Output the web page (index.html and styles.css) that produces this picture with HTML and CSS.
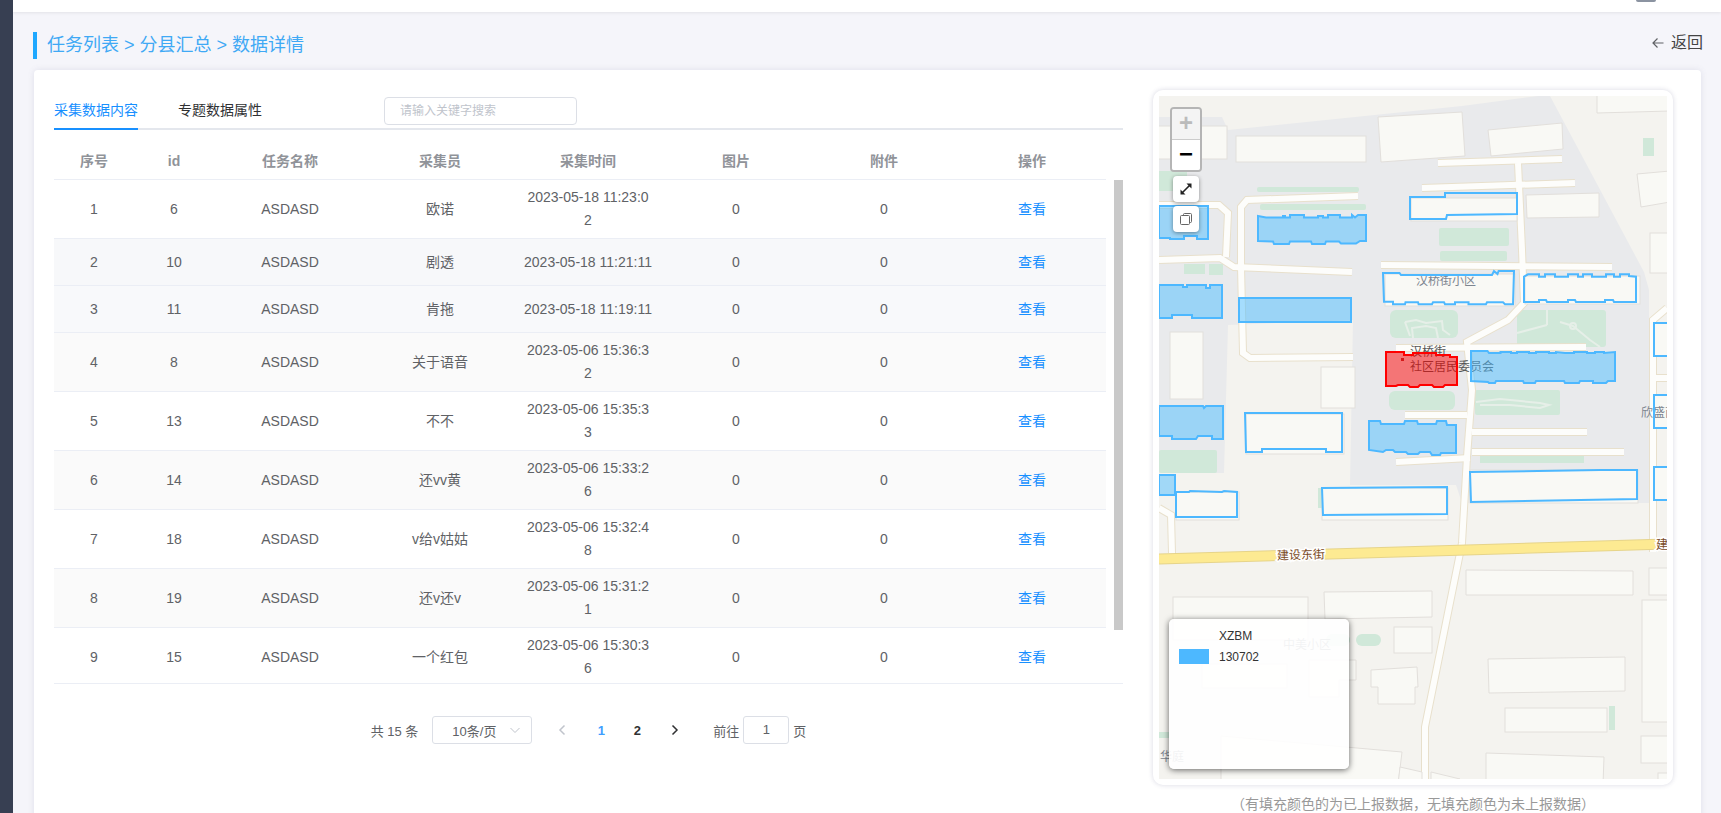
FILE: index.html
```html
<!DOCTYPE html>
<html lang="zh-CN">
  <head>
    <meta charset="UTF-8" />
    <title>数据详情</title>
    <link rel="stylesheet" href="styles.css">
  </head>
  <body>
    <aside class="sidebar"></aside>

    <div class="main">
      <div class="topbar"><span class="avatar"></span></div>

      <div class="title-row">
        <h1 class="title">任务列表 &gt; 分县汇总 &gt; 数据详情</h1>
        <a class="back">
          <svg class="back-icon" viewBox="0 0 12 12"><path d="M11.5 6H1M5.5 1.5 1 6l4.5 4.5" /></svg>
          返回
        </a>
      </div>

      <div class="card">
        <section class="left">
          <div class="tabs">
            <span class="tab active">采集数据内容</span>
            <span class="tab">专题数据属性</span>
            <input class="search" type="text" placeholder="请输入关键字搜索" />
          </div>

          <table class="grid grid-head">
            <colgroup>
              <col class="c1" /><col class="c2" /><col class="c3" /><col class="c4" />
              <col class="c5" /><col class="c6" /><col class="c7" /><col class="c8" />
            </colgroup>
            <thead>
              <tr>
                <th>序号</th>
                <th>id</th>
                <th>任务名称</th>
                <th>采集员</th>
                <th>采集时间</th>
                <th>图片</th>
                <th>附件</th>
                <th>操作</th>
              </tr>
            </thead>
          </table>

          <div class="body-wrap">
            <div class="body-scroll">
              <table class="grid">
                <colgroup>
                  <col class="c1" /><col class="c2" /><col class="c3" /><col class="c4" />
                  <col class="c5" /><col class="c6" /><col class="c7" /><col class="c8" />
                </colgroup>
                <tbody>
                  <tr>
                    <td>1</td><td>6</td><td>ASDASD</td><td>欧诺</td>
                    <td class="time">2023-05-18 11:23:0<br />2</td>
                    <td>0</td><td>0</td><td><a class="link">查看</a></td>
                  </tr>
                  <tr class="hover">
                    <td>2</td><td>10</td><td>ASDASD</td><td>剧透</td>
                    <td class="time">2023-05-18 11:21:11</td>
                    <td>0</td><td>0</td><td><a class="link">查看</a></td>
                  </tr>
                  <tr class="soft">
                    <td>3</td><td>11</td><td>ASDASD</td><td>肯拖</td>
                    <td class="time">2023-05-18 11:19:11</td>
                    <td>0</td><td>0</td><td><a class="link">查看</a></td>
                  </tr>
                  <tr class="stripe">
                    <td>4</td><td>8</td><td>ASDASD</td><td>关于语音</td>
                    <td class="time">2023-05-06 15:36:3<br />2</td>
                    <td>0</td><td>0</td><td><a class="link">查看</a></td>
                  </tr>
                  <tr>
                    <td>5</td><td>13</td><td>ASDASD</td><td>不不</td>
                    <td class="time">2023-05-06 15:35:3<br />3</td>
                    <td>0</td><td>0</td><td><a class="link">查看</a></td>
                  </tr>
                  <tr class="stripe">
                    <td>6</td><td>14</td><td>ASDASD</td><td>还vv黄</td>
                    <td class="time">2023-05-06 15:33:2<br />6</td>
                    <td>0</td><td>0</td><td><a class="link">查看</a></td>
                  </tr>
                  <tr>
                    <td>7</td><td>18</td><td>ASDASD</td><td>v给v姑姑</td>
                    <td class="time">2023-05-06 15:32:4<br />8</td>
                    <td>0</td><td>0</td><td><a class="link">查看</a></td>
                  </tr>
                  <tr class="stripe">
                    <td>8</td><td>19</td><td>ASDASD</td><td>还v还v</td>
                    <td class="time">2023-05-06 15:31:2<br />1</td>
                    <td>0</td><td>0</td><td><a class="link">查看</a></td>
                  </tr>
                  <tr>
                    <td>9</td><td>15</td><td>ASDASD</td><td>一个红包</td>
                    <td class="time">2023-05-06 15:30:3<br />6</td>
                    <td>0</td><td>0</td><td><a class="link">查看</a></td>
                  </tr>
                </tbody>
              </table>
            </div>
            <div class="gutter"><div class="thumb"></div></div>
          </div>

          <div class="pager">
            <span class="total">共 15 条</span>
            <span class="size-select">
              10条/页
              <svg class="size-arrow" viewBox="0 0 12 12"><path d="M1.5 4 6 8.5 10.5 4" /></svg>
            </span>
            <svg class="chev chev-off" viewBox="0 0 10 12"><path d="M7.5 1.5 3 6l4.5 4.5" /></svg>
            <span class="num num-on">1</span>
            <span class="num">2</span>
            <svg class="chev" viewBox="0 0 10 12"><path d="M2.5 1.5 7 6l-4.5 4.5" /></svg>
            <span class="jump">前往</span>
            <span class="jump-box">1</span>
            <span class="jump-end">页</span>
          </div>
        </section>

        <section class="right">
          <div class="map-frame">
            <div class="map">
              <svg class="map-svg" viewBox="1159 96 508 683">
                <defs>
                  <g id="roads">
                    <polyline points="1438,163 1562,159" />
                    <polyline points="1422,188 1575,183" />
                    <polyline points="1518,163 1522,250 1524,303 1508,320 1467,342 1472,390 1467,457 1462,543 1425,727 1425,779" />
                    <polyline points="1381,265 1612,267" />
                    <polyline points="1159,260 1220,258 1234,267 1352,272" />
                    <polyline points="1358,196 1247,200 1241,207 1241,267 1243,353 1250,358 1353,357" />
                    <polyline points="1159,205 1219,205 1228,213 1226,257" />
                    <polyline points="1396,348 1586,347" />
                    <polyline points="1405,415 1467,415" />
                    <polyline points="1472,432 1587,432" />
                    <polyline points="1472,452 1624,452" />
                    <polyline points="1396,462 1470,458" />
                    <polyline points="1667,308 1653,320 1653,552" />
                    <polyline points="1653,378 1667,378" />
                    <polyline points="1159,508 1171,515 1172,553" />
                  </g>
                </defs>

                <polygon class="block" points="1159,117 1222,117 1228,130 1462,106 1538,96 1550,96 1644,272 1649,290 1649,503 1462,503 1456,485 1350,485 1353,320 1228,325 1224,473 1159,473" />

                <g class="green">
                  <rect x="1643" y="138" width="11" height="18" />
                  <rect x="1159" y="171" width="28" height="20" />
                  <rect x="1257" y="187" width="102" height="5" rx="2" />
                  <rect x="1260" y="204" width="106" height="6" rx="2" />
                  <rect x="1439" y="228" width="70" height="18" rx="2" />
                  <rect x="1440" y="251" width="67" height="10" rx="2" />
                  <rect x="1184" y="264" width="21" height="10" />
                  <rect x="1209" y="264" width="14" height="11" />
                  <rect x="1390" y="310" width="68" height="28" rx="6" />
                  <rect x="1517" y="310" width="89" height="37" rx="3" />
                  <rect x="1389" y="391" width="66" height="19" rx="6" />
                  <rect x="1475" y="390" width="85" height="25" rx="2" />
                  <rect x="1159" y="450" width="58" height="23" rx="2" />
                  <rect x="1480" y="455" width="104" height="8" />
                  <rect x="1318" y="488" width="6" height="20" />
                  <rect x="1326" y="634" width="24" height="12" rx="6" />
                  <rect x="1356" y="634" width="25" height="12" rx="6" />
                  <rect x="1609" y="706" width="6" height="24" />
                  <rect x="1159" y="732" width="10" height="6" />
                </g>

                <g class="garden-path">
                  <polyline points="1405,322 1416,320 1426,323 1442,321 1443,330 1450,335" />
                  <polyline points="1405,322 1410,336" />
                  <polyline points="1413,338 1412,328 1426,326 1436,328 1438,338" />
                  <polyline points="1517,333 1547,325" />
                  <polyline points="1547,310 1547,325" />
                  <polyline points="1560,322 1573,326 1590,340 1600,347" />
                  <circle cx="1573" cy="326" r="3" />
                  <polyline points="1476,402 1500,399 1540,403 1549,405 1540,408 1510,405 1480,405" />
                </g>

                <use class="road-edge" href="#roads" />
                <use class="road-top" href="#roads" />

                <g class="bld">
                  <rect x="1158" y="126" width="69" height="33" />
                  <rect x="1236" y="136" width="130" height="26" />
                  <polygon points="1378,117 1462,112 1465,156 1381,162" />
                  <polygon points="1488,130 1562,123 1563,149 1491,156" />
                  <polygon points="1597,90 1670,90 1670,111 1597,113" />
                  <polygon points="1637,174 1670,171 1670,202 1641,207" />
                  <polygon points="1526,195 1599,193 1599,217 1527,218" />
                  <rect x="1650" y="233" width="20" height="40" />
                  <rect x="1411" y="198" width="106" height="23" />
                  <rect x="1385" y="274" width="130" height="32" />
                  <rect x="1525" y="276" width="115" height="28" />
                  <rect x="1170" y="332" width="33" height="67" />
                  <rect x="1321" y="367" width="34" height="41" />
                  <rect x="1246" y="414" width="98" height="40" />
                  <rect x="1176" y="492" width="63" height="28" />
                  <rect x="1322" y="488" width="126" height="32" />
                  <rect x="1470" y="470" width="168" height="33" />
                  <rect x="1654" y="323" width="16" height="33" />
                  <rect x="1654" y="395" width="16" height="33" />
                  <rect x="1654" y="467" width="16" height="33" />
                  <rect x="1173" y="597" width="135" height="43" />
                  <polygon points="1324,592 1432,591 1432,617 1325,619" />
                  <polygon points="1466,570 1633,571 1633,595 1466,595" />
                  <rect x="1649" y="568" width="21" height="27" />
                  <rect x="1394" y="627" width="38" height="26" />
                  <polygon points="1371,670 1417,667 1418,687 1415,687 1415,704 1378,704 1378,687 1371,687" />
                  <polygon points="1309,660 1356,660 1356,680 1339,680 1339,697 1309,697" />
                  <polygon points="1488,659 1625,657 1625,691 1489,693" />
                  <rect x="1642" y="600" width="28" height="122" />
                  <rect x="1505" y="708" width="102" height="24" />
                  <rect x="1641" y="736" width="29" height="27" />
                  <polygon points="1486,753 1604,757 1603,785 1486,785" />
                  <rect x="1658" y="773" width="12" height="12" />
                  <polygon points="1221,736 1402,752 1398,785 1221,785" />
                  <polygon points="1400,767 1422,772 1422,785 1398,785" />
                  <polygon points="1431,772 1460,779 1431,785" />
                  <rect x="1202" y="664" width="85" height="24" />
                </g>

                <polyline class="road-yellow-edge" points="1159,559 1667,544" />
                <polyline class="road-yellow" points="1159,559 1667,544" />

                <g class="label">
                  <text x="1416" y="285">汉桥街小区</text>
                  <text x="1641" y="417">欣盛南</text>
                  <text x="1283" y="649">中美小区</text>
                  <text x="1160" y="761">华庭</text>
                </g>
                <g class="label label-dark">
                  <text x="1410" y="356">汉桥街</text>
                  <text x="1410" y="371">社区居民委员会</text>
                </g>
                <rect class="poi" x="1401" y="358" width="3" height="3" />

                <g class="road-name">
                  <text x="1277" y="559" transform="rotate(-1.6 1300 555)">建设东街</text>
                  <text x="1656" y="549">建</text>
                </g>

                <g class="zone">
                  <polygon points="1159,206 1208,206 1208,239 1197,239 1197,236 1184,236 1184,239 1170,239 1170,238 1159,238" />
                  <polygon points="1258,216 1266,217.5 1283,217.5 1283,216 1285,216 1285,217.5 1290,217.5 1290,215 1304,215 1304,217.5 1318,217.5 1318,216 1323,216 1323,217.5 1328,217.5 1328,215 1340,215 1340,217.5 1352,217.5 1352,215 1355,217.5 1358,215 1366,215 1366,241 1360,241 1356,243.5 1341,243.5 1339,241.5 1326,241.5 1325,244 1312,244 1311,241.5 1290,241.5 1289,244 1274,244 1273,241.5 1258,241" />
                  <polygon points="1159,285 1183,285 1183,287 1187,287 1187,285 1206,285 1206,288 1210,288 1210,285 1222,285 1222,318 1192,318 1192,315 1172,315 1172,318 1159,318" />
                  <rect x="1239" y="298" width="112" height="24" />
                  <polygon points="1471,351 1487.5,351 1489,353 1500.5,353 1500.5,352 1511,352 1511,353 1517,353 1517,352 1529,352 1529,353 1536,353 1536,352 1549,352 1549,353 1556,353 1556,352 1565,353 1574,353 1574,352 1587,352 1587,353 1595,353 1595,352 1604,352 1604,353 1615,352 1615,381 1608,381 1606,383 1593,383 1593,381 1580,381 1579,383 1565,383 1564,381 1536,381 1535,383 1524,383 1523,381 1496,381 1495,383 1489,383 1488,382 1471,381" />
                  <polygon points="1159,406 1203,406 1204,408 1206,406 1223,406 1223,439 1212,439 1212,436 1198,436 1196,439 1172,439 1172,436 1159,436" />
                  <polygon points="1369,421 1380,421 1381,424 1404,424 1405,421 1417,421 1418,424 1436,424 1437,421 1446,421 1447,425 1456,425 1456,453 1441,453 1440,455 1432,455 1430,452 1420,452 1418,454 1408,454 1406,452 1395,452 1393,450 1386,450 1383,452 1369,450" />
                  <rect x="1159" y="475" width="16" height="20" />
                </g>

                <g class="zone-open">
                  <polygon points="1410,197 1445,197 1445,193 1517,193 1517,214 1447,215 1446,219 1410,219" />
                  <polygon points="1383,273 1399.5,273 1401,275 1492,275 1494,271 1497.5,274 1498.6,271 1514,271 1513,304.3 1505,304.3 1503,302.3 1487,302.3 1486,304.3 1468.5,304.3 1468.5,302.3 1455,302.3 1455,304.3 1445,304.3 1444,302.3 1433,302.3 1432,304.3 1418.6,304.3 1418,302.3 1405.5,302.3 1405,304.3 1393,304.3 1393,301.7 1384,301.7" />
                  <polygon points="1524,276.7 1528,274.3 1539,274.3 1539,276.7 1545,276.7 1545,274.3 1555,274.3 1555,276.7 1568,276.7 1568,274.3 1578,274.3 1578,276.7 1583,276.7 1583,274.3 1592,274.3 1592,276.7 1606,276.7 1606,274.3 1614,274.3 1614,276.7 1620,276.7 1620,274.3 1629,274.3 1629,276 1636,276.7 1636,302 1614,302 1613,300 1605,300 1605,302 1576,302 1575,300 1568,300 1568,302 1547,302 1546,300 1539,300 1539,302 1524,302" />
                  <polygon points="1245,413 1342,413 1342,452 1326,452 1326,449 1262,449 1262,452 1246,452" />
                  <polygon points="1176,492 1189,492 1190,491 1222,492 1224,491 1237,492 1237,517 1176,517" />
                  <polygon points="1322,488 1447,487 1447,514 1323,515" />
                  <polygon points="1470,472 1538,471 1600,470 1637,470 1637,499 1471,502" />
                  <rect x="1654" y="323" width="20" height="33" />
                  <rect x="1654" y="395" width="20" height="33" />
                  <rect x="1654" y="467" width="20" height="33" />
                </g>

                <polygon class="zone-red" points="1386,352 1404,352 1404,355 1413,355 1413,353 1436,353 1436,355 1450,355 1450,357 1457,357 1457,385 1445,385 1443,387 1434,387 1432,385 1420,385 1418,387 1410,387 1408,385 1398,385 1396,386 1386,386" />
              </svg>

              <div class="map-zoom">
                <span class="zoom-btn zoom-off">+</span>
                <span class="zoom-btn">−</span>
              </div>
              <div class="map-tool map-tool-full">
                <svg viewBox="0 0 14 14"><path class="tool-line" d="M3.5 10.5l7-7" /><path class="tool-fill" d="M7.5 1.5h5v5zM1.5 7.5v5h5z" /></svg>
              </div>
              <div class="map-tool">
                <svg viewBox="0 0 14 14"><path class="tool-copy" d="M4.5 3V2.5a1 1 0 0 1 1-1h6a1 1 0 0 1 1 1v7a1 1 0 0 1-1 1H11M2.5 3.5h7a1 1 0 0 1 1 1v7a1 1 0 0 1-1 1h-7a1 1 0 0 1-1-1v-7a1 1 0 0 1 1-1z" /></svg>
              </div>

              <div class="legend">
                <div class="legend-row"><span class="swatch-none"></span><span>XZBM</span></div>
                <div class="legend-row"><span class="swatch"></span><span>130702</span></div>
              </div>
            </div>
          </div>
          <p class="caption">（有填充颜色的为已上报数据，无填充颜色为未上报数据）</p>
        </section>
      </div>
    </div>
  </body>
</html>
```

FILE: styles.css
```css
html,
body {
  height: 100%;
}

body {
  display: flex;
  margin: 0;
  overflow: hidden;
  background-color: #f5f5fa;
  font-family: "Liberation Sans", "Noto Sans CJK SC", sans-serif;
  font-size: 14px;
  color: #606266;
}

.sidebar {
  flex: none;
  width: 13px;
  background-color: #373f52;
}

.main {
  flex: 1;
  min-width: 0;
  height: 100%;
  overflow: hidden;
}

.topbar {
  display: flex;
  justify-content: flex-end;
  height: 12px;
  padding-right: 65px;
  background-color: #fff;
  box-shadow: 0 1px 3px rgba(0, 0, 0, 0.08);
}

.avatar {
  width: 20px;
  height: 2px;
  background-color: #8b93a1;
  border-radius: 0 0 8px 8px;
}

.title-row {
  display: flex;
  justify-content: space-between;
  align-items: flex-start;
  margin: 20px 18px 11px 20px;
}

.title {
  margin: 0;
  padding-left: 10px;
  border-left: 4px solid #1fa8ff;
  font-size: 18px;
  font-weight: normal;
  line-height: 27px;
  color: #3fa9f5;
}

.back {
  display: flex;
  align-items: center;
  gap: 7px;
  font-size: 16px;
  line-height: 22px;
  color: #444;
}

.back-icon {
  width: 12px;
  height: 12px;
  fill: none;
  stroke: #606266;
  stroke-width: 1.2;
}

.card {
  display: flex;
  gap: 30px;
  width: 1667px;
  height: 900px;
  margin-left: 21px;
  padding: 20px 28px 0 20px;
  box-sizing: border-box;
  background-color: #fff;
  border-radius: 4px;
  box-shadow: 0 0 6px rgba(100, 100, 140, 0.15);
}

.left {
  flex: none;
  width: 1069px;
  padding-top: 7px;
}

.tabs {
  display: flex;
  align-items: flex-start;
  height: 33px;
  box-sizing: border-box;
  border-bottom: 2px solid #e4e7ed;
}

.tab {
  height: 31px;
  margin-right: 40px;
  font-size: 14px;
  line-height: 27px;
  color: #303133;
  white-space: nowrap;
}

.tab.active {
  height: 33px;
  box-sizing: border-box;
  border-bottom: 2px solid #1890ff;
  color: #1890ff;
}

.search {
  width: 193px;
  height: 28px;
  margin-left: 82px;
  padding: 0 15px;
  box-sizing: border-box;
  border: 1px solid #dcdfe6;
  border-radius: 4px;
  font-family: inherit;
  font-size: 12px;
}

.search::placeholder {
  color: #c0c4cc;
}

.grid {
  width: 1052px;
  table-layout: fixed;
  border-collapse: collapse;
  text-align: center;
}

.c1 { width: 80px; }
.c2 { width: 80px; }
.c3 { width: 152px; }
.c4, .c5, .c6, .c7, .c8 { width: 148px; }

.grid th {
  padding: 20px 0 6px;
  border-bottom: 1px solid #ebeef5;
  color: #909399;
  line-height: 23px;
}

.grid td {
  padding: 12px 0 11px;
  border-bottom: 1px solid #ebeef5;
  line-height: 23px;
}

.grid td.time {
  padding: 6px 0;
  white-space: nowrap;
}

.grid tr.hover td {
  background-color: #f7f8fa;
}

.grid tr.soft td {
  background-color: #f8f9fb;
}

.grid tr.stripe td {
  background-color: #fafafa;
}

.link {
  color: #1890ff;
}

.body-wrap {
  display: flex;
  height: 503px;
  border-bottom: 1px solid #ebeef5;
}

.body-scroll {
  width: 1052px;
  overflow: hidden;
}

.gutter {
  flex: none;
  padding-left: 8px;
}

.thumb {
  width: 9px;
  height: 450px;
  background-color: #c9c9c9;
}

.pager {
  display: flex;
  justify-content: center;
  align-items: center;
  height: 28px;
  margin-top: 32px;
  font-size: 13px;
}

.total {
  margin-right: 14px;
}

.size-select {
  display: flex;
  justify-content: space-between;
  align-items: center;
  width: 100px;
  height: 28px;
  margin-right: 17px;
  padding: 0 10px 0 19px;
  box-sizing: border-box;
  border: 1px solid #dcdfe6;
  border-radius: 3px;
}

.size-arrow {
  width: 12px;
  height: 12px;
  fill: none;
  stroke: #c0c4cc;
}

.chev {
  width: 10px;
  height: 12px;
  margin: 0 8px;
  fill: none;
  stroke: #303133;
  stroke-width: 1.5;
}

.chev-off {
  stroke: #c0c4cc;
}

.num {
  width: 36px;
  font-weight: bold;
  color: #303133;
  text-align: center;
}

.num-on {
  margin-left: 8px;
  color: #409eff;
}

.num + .chev {
  margin-left: 15px;
}

.jump {
  margin-left: 25px;
  margin-right: 4px;
}

.jump-box {
  width: 46px;
  height: 28px;
  box-sizing: border-box;
  border: 1px solid #dcdfe6;
  border-radius: 3px;
  line-height: 26px;
  text-align: center;
}

.jump-end {
  margin-left: 4px;
}

.right {
  flex: none;
  width: 520px;
}

.map-frame {
  padding: 6px;
  background-color: #fff;
  border-radius: 10px;
  box-shadow: 0 0 5px rgba(60, 60, 110, 0.2);
}

.map {
  position: relative;
  height: 683px;
  overflow: hidden;
}

.map-svg {
  display: block;
  width: 508px;
  height: 683px;
  background-color: #f4f3ef;
  font-family: "Liberation Sans", "Noto Sans CJK SC", sans-serif;
}

.block {
  fill: #e9eaec;
}

.green rect {
  fill: #d0e8d9;
}

.garden-path polyline,
.garden-path circle {
  fill: none;
  stroke: #e6efe8;
  stroke-width: 2;
}

#roads polyline {
  fill: none;
}

.road-edge {
  fill: none;
  stroke: #e8e0cc;
  stroke-width: 8;
}

.road-top {
  fill: none;
  stroke: #fdfdfb;
  stroke-width: 6;
}

.bld rect,
.bld polygon {
  fill: #f9f9f5;
  stroke: #e2dfdb;
}

.road-yellow-edge {
  fill: none;
  stroke: #e6d48a;
  stroke-width: 11;
}

.road-yellow {
  fill: none;
  stroke: #fdea92;
  stroke-width: 9;
}

.label text {
  font-size: 12px;
  fill: #7d8590;
}

.label-dark text {
  fill: #555;
}

.poi {
  fill: #a33;
}

.road-name text {
  font-size: 12px;
  fill: #7a4a1e;
  stroke: #fff;
  stroke-width: 3px;
  paint-order: stroke;
}

.zone polygon,
.zone rect {
  fill: rgba(77, 190, 255, 0.5);
  stroke: #4db8ff;
  stroke-width: 2;
}

.zone-open polygon,
.zone-open rect {
  fill: none;
  stroke: #4db8ff;
  stroke-width: 2;
}

.zone-red {
  fill: rgba(255, 0, 0, 0.5);
  stroke: #f00;
  stroke-width: 2;
}

.map-zoom {
  position: absolute;
  top: 11px;
  left: 11px;
  display: flex;
  flex-direction: column;
  width: 28px;
  border: 2px solid #b5b5b5;
  border-radius: 4px;
  overflow: hidden;
}

.zoom-btn {
  height: 30px;
  background-color: #fff;
  color: #000;
  font-family: "Liberation Sans", sans-serif;
  font-size: 24px;
  font-weight: bold;
  line-height: 28px;
  text-align: center;
}

.zoom-off {
  border-bottom: 1px solid #ccc;
  background-color: #f4f4f4;
  color: #bbb;
}

.map-tool {
  position: absolute;
  top: 110px;
  left: 14px;
  display: flex;
  justify-content: center;
  align-items: center;
  width: 26px;
  height: 26px;
  background-color: #fff;
  border-radius: 4px;
  box-shadow: 0 1px 4px rgba(0, 0, 0, 0.4);
}

.map-tool-full {
  top: 80px;
}

.map-tool svg {
  width: 14px;
  height: 14px;
}

.tool-line {
  stroke: #222;
  stroke-width: 1.6;
}

.tool-fill {
  fill: #222;
}

.tool-copy {
  fill: none;
  stroke: #666;
}

.legend {
  position: absolute;
  top: 523px;
  left: 10px;
  width: 180px;
  height: 150px;
  padding: 6px 10px;
  box-sizing: border-box;
  background-color: rgba(255, 255, 255, 0.9);
  border-radius: 5px;
  box-shadow: 0 1px 6px rgba(0, 0, 0, 0.6);
  font-size: 12px;
  color: #333;
}

.legend-row {
  display: flex;
  align-items: center;
  gap: 10px;
  height: 21px;
}

.swatch,
.swatch-none {
  flex: none;
  width: 30px;
  height: 15px;
}

.swatch {
  background-color: #4db8ff;
}

.caption {
  margin: 10px 0 0;
  font-size: 14px;
  line-height: 18px;
  color: #999;
  text-align: center;
}
```
